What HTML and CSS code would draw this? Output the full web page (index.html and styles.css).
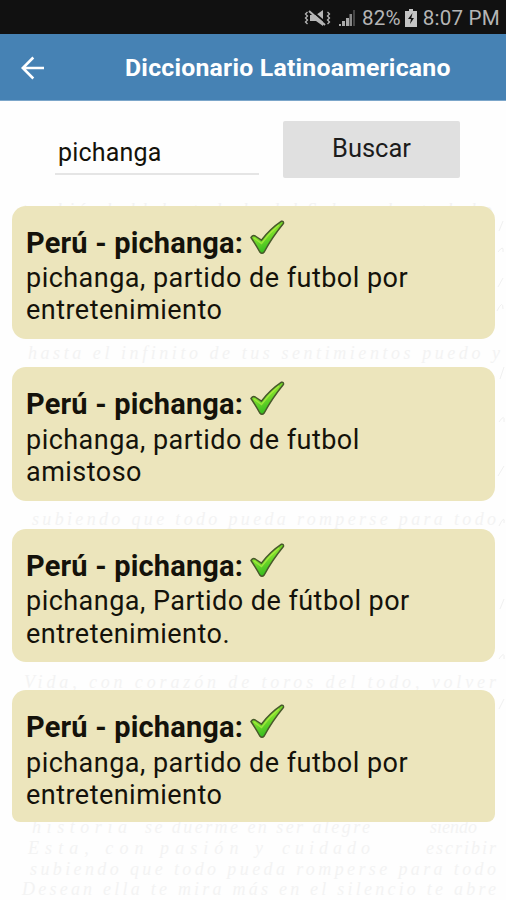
FILE: index.html
```html
<!DOCTYPE html>
<html lang="es">
<head>
<meta charset="utf-8">
<title>Diccionario Latinoamericano</title>
<link rel="stylesheet" href="styles.css">
</head>
<body>
<svg class="symbols" aria-hidden="true">
  <defs>
    <linearGradient id="leaf" x1="0" y1="0" x2="0.4" y2="1">
      <stop offset="0" stop-color="#4fae1c"/><stop offset="0.5" stop-color="#7fe02c"/><stop offset="1" stop-color="#2fb81e"/>
    </linearGradient>
    <symbol id="check" viewBox="0 0 36 36">
      <path d="M2 17.5Q4 14.6 6.2 16L12.4 20.2Q21 9 32.5 1.2Q35 .8 34.4 3.6Q23 17.5 15.2 32Q13 34.6 10.8 32Q7 25 2 17.5Z" fill="url(#leaf)" stroke="#47592a" stroke-width="1.5" stroke-linejoin="round"/>
      <path d="M5 18L12.5 23.5Q20 13 30 5" fill="none" stroke="#b4ec45" stroke-width="1.3" opacity=".7"/>
    </symbol>
  </defs>
</svg>
<div class="phone">
  <header class="status">
    <svg class="mute" viewBox="0 0 27 18" fill="none" stroke="#b5b5b5">
      <path d="M6 6h6l7-5v16l-7-5H6z" fill="#b5b5b5" stroke="none"/>
      <path d="M8 2l14 12" stroke="#111" stroke-width="2"/><path d="M5 2l16 14" stroke-width="2"/>
      <path d="M3.5 3l-2 2 2 2-2 2 2 2-2 2 2 2M23.5 3l2 2-2 2 2 2-2 2 2 2-2 2" stroke-width="1.3"/>
    </svg>
    <svg class="signal" viewBox="0 0 18 18"><path d="M1 15h2v2H1zM4 12h3v5H4zM8 9h3v8H8z" fill="#aaa"/><path d="M11.5 5h2.5v12h-2.5z" fill="#888"/><path d="M15 1h2v16h-2z" fill="#454545"/></svg>
    <span class="percent">82%</span>
    <svg class="battery" viewBox="0 0 12 18"><path d="M4 0h4v2h4v16H0V2h4z" fill="#c4c4c4"/><path d="M7.5 4L3 10h3l-1 5 4-6H6.3z" fill="#111"/></svg>
    <span class="time">8:07 PM</span>
  </header>
  <nav class="bar">
    <svg class="back" viewBox="0 0 24 24" fill="none" stroke="#fff" stroke-width="2.6"><path d="M23 12H2M12.3 1.5L1.8 12l10.5 10.5"/></svg>
    <h1>Diccionario Latinoamericano</h1>
  </nav>
  <main class="content">
    <svg class="script" viewBox="0 0 506 799" aria-hidden="true">
      <text x="22" y="115" textLength="470">también hablaba todo lo del Sol que hasta hubo</text>
      <text x="28" y="258" textLength="472">hasta el infinito de tus sentimientos puedo y</text>
      <text x="32" y="424" textLength="464">subiendo que todo pueda romperse para todo</text>
      <text x="24" y="587" textLength="472">Vida, con corazón de toros del todo, volver</text>
      <text x="32" y="732" textLength="95">historia</text><text x="145" y="732" textLength="225">se duerme en ser alegre</text><text x="430" y="732">siendo</text>
      <text x="28" y="753" textLength="235">Esta, con pasión y</text><text x="282" y="753" textLength="88">cuidado</text><text x="426" y="753" textLength="70">escribir</text>
      <text x="30" y="774" textLength="466">subiendo que todo pueda romperse para todo</text>
      <text x="22" y="794" textLength="474">Desean ella te mira más en el silencio te abre</text>
      <path d="M499 130l4-10m-5 31q6-8 5 0m-5 35l5-9m-6 33q6-12 6-2m-3 70l4-12m-5 55q6-9 5 0m-6 54l6-10m-5 60q6-12 5-3m-4 86l4-10m-5 60q6-9 5 0m-5 50l5-10" fill="none" stroke="#f0f0f0"/>
    </svg>
    <form class="search">
      <div class="field">pichanga</div>
      <button type="button">Buscar</button>
    </form>
    <section class="results">
      <article><h2>Perú - pichanga: <svg><use href="#check"/></svg></h2><p>pichanga, partido de futbol por<br>entretenimiento</p></article>
      <article><h2>Perú - pichanga: <svg><use href="#check"/></svg></h2><p>pichanga, partido de futbol<br>amistoso</p></article>
      <article><h2>Perú - pichanga: <svg><use href="#check"/></svg></h2><p>pichanga, Partido de fútbol por<br>entretenimiento.</p></article>
      <article class="last"><h2>Perú - pichanga: <svg><use href="#check"/></svg></h2><p>pichanga, partido de futbol por<br>entretenimiento</p></article>
    </section>
  </main>
</div>
</body>
</html>
```
FILE: styles.css
```css
* { box-sizing: border-box; }
body { margin: 0; background: #fefefe; font-family: Roboto, sans-serif; color: #14120a; }
.symbols { position: absolute; width: 0; height: 0; }
.phone { width: 506px; height: 900px; overflow: hidden; display: flex; flex-direction: column; }
.status { height: 34px; flex: none; background: #111; color: #b5b5b5; display: flex; align-items: center; justify-content: flex-end; padding: 2px 6px 0 0; font-size: 20.6px; line-height: 34px; letter-spacing: .2px; }
.mute { width: 27px; height: 18px; margin-right: 7px; }
.signal { width: 18px; height: 18px; margin-right: 6px; }
.battery { width: 12px; height: 18px; margin: 0 6px 0 4px; }
.bar { height: 67px; flex: none; background: #4682b4; border-bottom: 1px solid #7ca6ca; display: flex; align-items: center; padding-left: 21px; color: #fff; }
.back { width: 24px; height: 24px; margin-right: 80px; margin-top: 2px; }
h1 { margin: 1px 0 0; font-size: 24.8px; font-weight: 700; line-height: 30px; letter-spacing: .23px; white-space: nowrap; }
.content { flex: 1; position: relative; padding: 20px 11px 0 12px; }
.script { position: absolute; left: 0; top: 0; width: 506px; height: 799px; font: italic 18px "Liberation Serif", serif; fill: #f3f3f3; }
.search { position: relative; display: flex; height: 57px; padding-left: 43px; }
.field { width: 204px; height: 54px; border-bottom: 2px solid #e5e5e5; padding-left: 3px; font-size: 25px; line-height: 63px; letter-spacing: .2px; margin-right: 24px; }
button { width: 177px; height: 57px; border: 0; border-radius: 2px; background: #e0e0e0; font: 25.5px/53px Roboto, sans-serif; color: #1c1c1c; padding: 0 0 2px; }
.results { position: relative; display: grid; gap: 28px; margin-top: 27.6px; grid-auto-rows: 133.6px; }
article { background: #ece5bc; border-radius: 14px; padding: 14px; }
.last { height: 132px; border-radius: 14px 14px 8px 8px; }
h2 { display: flex; align-items: flex-start; gap: 6px; height: 42.4px; margin: 0; font-size: 29px; font-weight: 700; line-height: 46px; letter-spacing: .18px; white-space: nowrap; }
h2 svg { width: 36px; height: 36px; }
p { margin: 0; font-size: 27px; line-height: 32.4px; letter-spacing: .47px; white-space: nowrap; }
```
